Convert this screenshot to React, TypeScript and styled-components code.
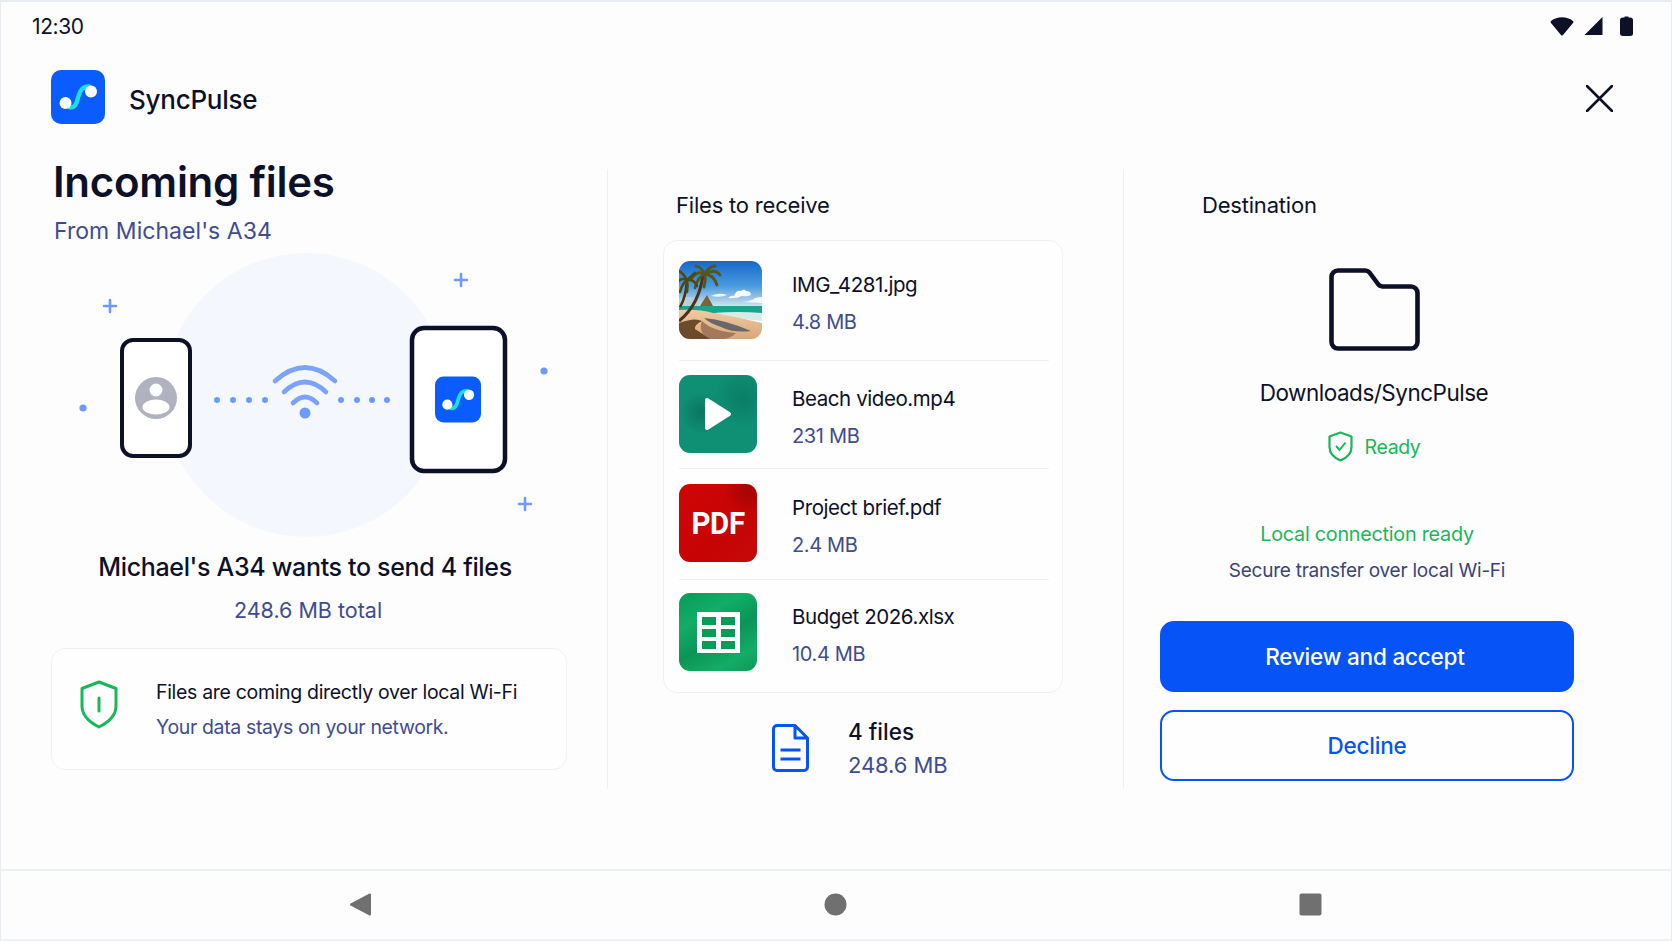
import React from "react";
import styled, { createGlobalStyle } from "styled-components";

const GlobalStyle = createGlobalStyle`
	html, body {
		margin: 0;
		padding: 0;
		overflow: hidden;
		background: #fdfdfe;
	}
	* {
		box-sizing: border-box;
	}
`;

const ink = "#0d1128";
const muted = "#3f4c8f";
const green = "#18b85a";
const blue = "#0653f7";
const line = "#eff1f6";

const Page = styled.div`
	width: 1672px;
	height: 941px;
	display: flex;
	flex-direction: column;
	background: #fdfdfe;
	color: ${ink};
	font-family: Inter, "Liberation Sans", sans-serif;
	border-left: 1px solid #e9edf2;
	border-right: 1px solid #e9edf2;
	border-top: 2px solid #e9edf2;
`;

const StatusBar = styled.div`
	height: 48px;
	display: flex;
	align-items: center;
	justify-content: space-between;
	padding: 0 38px 0 31px;
`;

const Time = styled.span`
	font-size: 21px;
	letter-spacing: -0.4px;
`;

const StatusIcons = styled.div`
	display: flex;
	align-items: center;
	gap: 10px;
`;

const Header = styled.div`
	height: 108px;
	display: flex;
	justify-content: space-between;
	padding: 20px 58px 0 50px;
`;

const Brand = styled.div`
	display: flex;
	align-items: center;
	height: 54px;
	gap: 24px;
`;

const BrandName = styled.span`
	padding-top: 4px;
	font-size: 26px;
	font-weight: 500;
	letter-spacing: -0.25px;
`;

const CloseIcon = styled.svg`
	margin-top: 15px;
`;

const Body = styled.div`
	flex: 1;
	display: grid;
	grid-template-columns: 606px 1px 515px 1px 1fr;
`;

const Divider = styled.div`
	margin-top: 11px;
	height: 620px;
	background: #edeff4;
`;

const LeftColumn = styled.div`
	padding-left: 50px;
`;

const Title = styled.h1`
	margin: 0;
	padding-left: 2px;
	font-size: 42px;
	line-height: 48px;
	font-weight: 600;
	letter-spacing: -0.26px;
`;

const Subtitle = styled.div`
	margin-top: 10px;
	padding-left: 3px;
	font-size: 23px;
	line-height: 30px;
	color: ${muted};
	letter-spacing: 0.05px;
`;

const Illustration = styled.svg`
	display: block;
	margin-top: 4px;
`;

const Offer = styled.div`
	width: 508px;
	text-align: center;
	font-size: 25px;
	line-height: 34px;
	font-weight: 500;
	letter-spacing: -0.33px;
	margin-top: 10px;
`;

const OfferTotal = styled.div`
	width: 514px;
	text-align: center;
	font-size: 21.5px;
	line-height: 30px;
	color: ${muted};
	margin-top: 11px;
`;

const Card = styled.div`
	border: 1.5px solid ${line};
	border-radius: 14px;
	background: #fefefe;
`;

const InfoCard = styled(Card)`
	width: 516px;
	height: 122px;
	margin-top: 23px;
	display: flex;
	align-items: center;
	gap: 38px;
	padding-left: 28px;
`;

const InfoShield = styled.svg`
	margin-bottom: 10px;
`;

const InfoText = styled.div`
	display: flex;
	flex-direction: column;
	gap: 9px;
`;

const InfoTitle = styled.div`
	font-size: 19.5px;
	line-height: 26px;
	letter-spacing: -0.32px;
`;

const InfoSub = styled.div`
	font-size: 19.5px;
	line-height: 26px;
	color: ${muted};
	letter-spacing: -0.36px;
`;

const MiddleColumn = styled.div`
	padding-left: 55px;
`;

const SectionLabel = styled.div<{ $inset: number }>`
	padding-left: ${(p) => p.$inset}px;
	margin-top: 33px;
	font-size: 22px;
	line-height: 28px;
	letter-spacing: -0.2px;
`;

const FileCard = styled(Card)`
	width: 400px;
	height: 453px;
	margin-top: 21px;
	padding: 0 13px 6px 15px;
	display: grid;
	grid-template-rows: 120px 108px 111px 1fr;
`;

const FileRow = styled.div`
	display: grid;
	grid-template-columns: 113px 1fr;
	align-items: center;
	border-bottom: 1.5px solid ${line};
	&:last-child {
		border-bottom: none;
	}
`;

const Thumb = styled.div<{ $tone?: string }>`
	width: 78px;
	height: 78px;
	margin-bottom: 2px;
	border-radius: 11px;
	display: flex;
	align-items: center;
	justify-content: center;
	overflow: hidden;
	background: ${(p) => p.$tone || "none"};
`;

const PhotoThumb = styled.svg`
	margin-bottom: 2px;
`;

const PdfLabel = styled.span`
	font-family: Roboto, "Liberation Sans", sans-serif;
	font-size: 31px;
	font-weight: 700;
	color: #ffffff;
	letter-spacing: -0.3px;
	transform: scaleX(0.95);
`;

const FileText = styled.div`
	display: flex;
	flex-direction: column;
	gap: 9px;
	padding-top: 5px;
`;

const FileName = styled.div`
	font-size: 20.5px;
	line-height: 28px;
	letter-spacing: -0.42px;
`;

const FileSize = styled.div`
	font-size: 20px;
	line-height: 28px;
	color: ${muted};
	letter-spacing: -0.35px;
`;

const Summary = styled.div`
	display: flex;
	align-items: center;
	gap: 39px;
	margin-top: 22px;
	padding-left: 109px;
`;

const SummaryText = styled.div`
	display: flex;
	flex-direction: column;
	gap: 3px;
	padding-top: 2px;
`;

const SummaryCount = styled.div`
	font-size: 22.5px;
	line-height: 30px;
	font-weight: 500;
`;

const SummarySize = styled.div`
	font-size: 22px;
	line-height: 30px;
	letter-spacing: -0.1px;
	color: ${muted};
`;

const RightColumn = styled.div`
	padding-left: 36px;
	width: 450px;
`;

const Destination = styled.div`
	width: 414px;
	padding-left: 14px;
	margin-top: 49px;
	display: flex;
	flex-direction: column;
	align-items: center;
`;

const FolderPath = styled.div`
	margin-top: 25px;
	font-size: 22.5px;
	line-height: 34px;
	letter-spacing: -0.5px;
`;

const ReadyRow = styled.div`
	margin-top: 21px;
	display: flex;
	align-items: center;
	gap: 12px;
	font-size: 19.5px;
	color: ${green};
	letter-spacing: -0.4px;
`;

const ConnectionText = styled.div<{ $ok?: boolean }>`
	width: 414px;
	text-align: center;
	font-size: ${(p) => (p.$ok ? 19.8 : 19)}px;
	line-height: 28px;
	letter-spacing: -0.25px;
	color: ${(p) => (p.$ok ? green : "#3a4478")};
`;

const ConnectionGroup = styled.div`
	margin-top: 58px;
	display: flex;
	flex-direction: column;
	gap: 9px;
`;

const Actions = styled.div`
	margin-top: 36px;
	display: flex;
	flex-direction: column;
	gap: 18px;
`;

const Button = styled.button<{ $primary?: boolean }>`
	width: 414px;
	height: 71px;
	padding: 0 ${(p) => (p.$primary ? 4 : 0)}px 0 0;
	border-radius: 14px;
	border: 2px solid ${blue};
	background: ${(p) => (p.$primary ? blue : "#fefefe")};
	color: ${(p) => (p.$primary ? "#ffffff" : blue)};
	font-family: inherit;
	font-size: 22.5px;
	font-weight: 500;
	letter-spacing: -0.2px;
`;

const NavBar = styled.div`
	height: 72px;
	flex-shrink: 0;
	border-top: 2px solid #eceff3;
	border-bottom: 2px solid #eef1f4;
	display: flex;
	align-items: center;
	justify-content: center;
	gap: 452px;
	padding: 0 2px 2px 0;
`;

const LogoArt = () => (
	<>
		<rect width="54" height="54" rx="10" fill="#0a5cff" />
		<path
			d="M19 37.5C26 37.5 26 30 27.5 26C29.5 20 31.5 16.5 38 16.5"
			fill="none"
			stroke="#19dfe6"
			strokeWidth="4.4"
			strokeLinecap="round"
		/>
		<circle cx="14.5" cy="33" r="6" fill="#fff" />
		<circle cx="40" cy="21.5" r="6" fill="#fff" />
	</>
);

const BeachThumb = () => (
	<PhotoThumb width="83" height="78" viewBox="0 0 83 78">
		<defs>
			<linearGradient id="sky" x1="0" y1="0" x2="0" y2="1">
				<stop offset="0" stopColor="#1668c9" />
				<stop offset="0.55" stopColor="#4c9be0" />
				<stop offset="1" stopColor="#d5e6ef" />
			</linearGradient>
			<linearGradient id="sand" x1="0" y1="0" x2="0" y2="1">
				<stop offset="0" stopColor="#f1cba1" />
				<stop offset="1" stopColor="#d9a679" />
			</linearGradient>
			<clipPath id="thumbClip">
				<rect width="83" height="78" rx="11" />
			</clipPath>
		</defs>
		<g clipPath="url(#thumbClip)">
			<rect width="83" height="46" fill="url(#sky)" />
			<path d="M49 37q3-3 6-2q2-6 7-5q3-3 5 0q5 0 5 4q-3 2-9 1q-6 3-14 2zM32 35q8-4 16-1q-6 3-16 1zM64 41q9-1 12-4q4-1 7-1v6z" fill="#f6f8fb" />
			<path d="M21 45L28 34L34 45z" fill="#7c6236" />
			<path d="M0 37q12-3 20 2v6H0z" fill="#b9cfd9" />
			<rect y="45" width="83" height="9" fill="#17a58d" />
			<path d="M34 52q24-2 49 0v8q-24-2-49-8z" fill="#d7ecea" />
			<path d="M0 49q20-1 34 3q24 4 49 10v16H0z" fill="url(#sand)" />
			<path d="M0 78V62q16-6 23-2q-8 4-7 8q6 4 16 10z" fill="#6e4a2c" />
			<path d="M23 60q10 10 34 12q-6 6-14 6H32q-14-6-9-18z" fill="#a4785a" />
			<path d="M25 57q22 2 47 13q-18 2-30-4q-12-4-17-9z" fill="#68686a" />
			<path d="M0 60Q20 44 24 14" fill="none" stroke="#4a331a" strokeWidth="3" />
			<path d="M1 46Q7 36 8 19" fill="none" stroke="#4a331a" strokeWidth="2.6" />
			<g fill="none" stroke="#56551a" strokeWidth="2.8" strokeLinecap="round">
				<path d="M26 13Q19 9 13 17" />
				<path d="M26 13Q19 15 16 27" />
				<path d="M26 13Q36 7 41 14" />
				<path d="M26 13Q35 14 38 24" />
				<path d="M26 13Q22 6 17 5" />
				<path d="M26 13Q29 6 36 5" />
				<path d="M26 13Q27 20 25 26" />
			</g>
			<g fill="none" stroke="#4e4a14" strokeWidth="2.6" strokeLinecap="round">
				<path d="M8 19Q2 16 -2 22" />
				<path d="M8 19Q3 23 1 31" />
				<path d="M8 19Q15 18 18 25" />
				<path d="M8 19Q13 15 16 12" />
				<path d="M8 19Q4 12 0 10" />
				<path d="M8 19Q9 25 8 31" />
			</g>
		</g>
	</PhotoThumb>
);

const Sheet = () => (
	<svg width="43" height="41" viewBox="0 0 43 41">
		<rect width="43" height="41" fill="#fff" />
		{[5, 17, 29].map((y) =>
			[5, 24].map((x) => (
				<rect key={`${x}-${y}`} x={x} y={y} width="14" height="8" fill="#0b9a57" />
			)),
		)}
	</svg>
);

const files = [
	{ name: "IMG_4281.jpg", size: "4.8 MB", kind: "image" },
	{ name: "Beach video.mp4", size: "231 MB", kind: "video" },
	{ name: "Project brief.pdf", size: "2.4 MB", kind: "pdf" },
	{ name: "Budget 2026.xlsx", size: "10.4 MB", kind: "sheet" },
];

const FileThumb = ({ kind }: { kind: string }) => {
	if (kind === "image") return <BeachThumb />;
	if (kind === "video")
		return (
			<Thumb $tone="radial-gradient(circle at 28% 48%, #0b7561 0%, transparent 30%), radial-gradient(circle at 82% 30%, #0a7d66 0%, transparent 35%), #0f8f74">
				<svg width="28" height="34" viewBox="0 0 28 34">
					<path d="M3 3L25 17L3 31Z" fill="#fff" stroke="#fff" strokeWidth="4" strokeLinejoin="round" />
				</svg>
			</Thumb>
		);
	if (kind === "pdf")
		return (
			<Thumb $tone="radial-gradient(circle at 88% 10%, #a50505 0%, transparent 24%), linear-gradient(135deg, #cf0505 0%, #c70404 60%, #c40a0a 100%)">
				<PdfLabel>PDF</PdfLabel>
			</Thumb>
		);
	return (
		<Thumb $tone="linear-gradient(150deg, #0a9a58 0%, #12ad66 30%, #0a9556 55%, #12ad66 80%, #0a9a58 100%)">
			<Sheet />
		</Thumb>
	);
};

const Plus = ({ x, y }: { x: number; y: number }) => (
	<path
		d={`M${x - 6} ${y}H${x + 6}M${x} ${y - 6}V${y + 6}`}
		stroke="#6c9bfb"
		strokeWidth="2.6"
		strokeLinecap="round"
	/>
);

const Transfer = () => (
	<Illustration width="556" height="290" viewBox="51 250 556 290">
		<circle cx="306" cy="395" r="142" fill="#f4f7fe" />
		<Plus x={110} y={306} />
		<Plus x={461} y={280} />
		<Plus x={525} y={504} />
		<circle cx="83" cy="408" r="3.6" fill="#6c9bfb" />
		<circle cx="544" cy="371" r="3.6" fill="#6c9bfb" />

		<rect x="122" y="340" width="68" height="116" rx="11" fill="#fff" stroke={ink} strokeWidth="4" />
		<circle cx="156" cy="398" r="21" fill="#b0b3bf" />
		<circle cx="156" cy="390" r="6.5" fill="#fff" />
		<ellipse cx="156" cy="407" rx="13.5" ry="7.5" fill="#fff" />

		<rect x="412" y="328" width="93" height="143" rx="12" fill="#fff" stroke={ink} strokeWidth="4.5" />
		<svg x="435" y="376" width="46" height="47" viewBox="0 0 54 54">
			<LogoArt />
		</svg>

		{[217, 233, 249, 265, 341, 357, 372, 387].map((x) => (
			<circle key={x} cx={x} cy="400" r="3" fill="#6c9bfb" />
		))}
		<g fill="none" stroke="#7aa3f9" strokeLinecap="round">
			<path d="M275 381Q305 354 335 381" strokeWidth="4.6" />
			<path d="M284 392Q305 372 326 392" strokeWidth="4.6" />
			<path d="M293 403Q305 391 317 403" strokeWidth="4.6" />
		</g>
		<circle cx="305" cy="413" r="5.5" fill="#6c9bfb" />
	</Illustration>
);

export default function App() {
	return (
		<Page>
			<GlobalStyle />
			<StatusBar>
				<Time>12:30</Time>
				<StatusIcons>
					<svg width="24" height="20" viewBox="0 0 24 20">
						<path d="M1 5C7 0 17 0 23 5Q24 6 23 7L13 19Q12 20 11 19L1 7Q0 6 1 5Z" fill={ink} />
					</svg>
					<svg width="19" height="20" viewBox="0 0 20 20">
						<path d="M19.5 0.5V19.5H0.5Z" fill={ink} />
					</svg>
					<svg width="20" height="20" viewBox="0 0 20 20">
						<path d="M11.500 0.5H15.500V1.500H17Q20 1.500 20 4V17.500Q20 20 17 20H10Q7 20 7 17.500V4Q7 1.500 10 1.500H11.500Z" fill={ink} />
					</svg>
				</StatusIcons>
			</StatusBar>
			<Header>
				<Brand>
					<svg width="54" height="54" viewBox="0 0 54 54">
						<LogoArt />
					</svg>
					<BrandName>SyncPulse</BrandName>
				</Brand>
				<CloseIcon width="27" height="27" viewBox="0 0 27 27">
					<path d="M1 1L26 26M26 1L1 26" stroke={ink} strokeWidth="2.6" strokeLinecap="round" />
				</CloseIcon>
			</Header>
			<Body>
				<LeftColumn>
					<Title>Incoming files</Title>
					<Subtitle>From Michael's A34</Subtitle>
					<Transfer />
					<Offer>Michael's A34 wants to send 4 files</Offer>
					<OfferTotal>248.6 MB total</OfferTotal>
					<InfoCard>
						<InfoShield width="38" height="49" viewBox="0 0 38 49">
							<path
								d="M19 2L36 8.5V26C36 36 28 42.5 19 47C10 42.5 2 36 2 26V8.5Z"
								fill="none"
								stroke={green}
								strokeWidth="3"
								strokeLinejoin="round"
							/>
							<path d="M19 18V31" stroke={green} strokeWidth="3" strokeLinecap="round" />
						</InfoShield>
						<InfoText>
							<InfoTitle>Files are coming directly over local Wi-Fi</InfoTitle>
							<InfoSub>Your data stays on your network.</InfoSub>
						</InfoText>
					</InfoCard>
				</LeftColumn>
				<Divider />
				<MiddleColumn>
					<SectionLabel $inset={13}>Files to receive</SectionLabel>
					<FileCard>
						{files.map((file) => (
							<FileRow key={file.name}>
								<FileThumb kind={file.kind} />
								<FileText>
									<FileName>{file.name}</FileName>
									<FileSize>{file.size}</FileSize>
								</FileText>
							</FileRow>
						))}
					</FileCard>
					<Summary>
						<svg width="37" height="48" viewBox="0 0 37 48">
							<path
								d="M5 1.5H23L35.5 14V43A3.5 3.5 0 0 1 32 46.5H5A3.5 3.5 0 0 1 1.5 43V5A3.5 3.5 0 0 1 5 1.5ZM23 1.5V14H35.5"
								fill="none"
								stroke={blue}
								strokeWidth="3"
								strokeLinejoin="round"
							/>
							<path d="M8.5 26H28.5M8.5 35H28.5" stroke={blue} strokeWidth="3" />
						</svg>
						<SummaryText>
							<SummaryCount>4 files</SummaryCount>
							<SummarySize>248.6 MB</SummarySize>
						</SummaryText>
					</Summary>
				</MiddleColumn>
				<Divider />
				<RightColumn>
					<SectionLabel $inset={42}>Destination</SectionLabel>
					<Destination>
						<svg width="91" height="83" viewBox="0 0 91 83">
							<path
								d="M9 2.5H36A6 6 0 0 1 40.500 4.500L49 16A6 6 0 0 0 53.500 18.500H82A6.500 6.500 0 0 1 88.500 25V74A6.500 6.500 0 0 1 82 80.500H9A6.500 6.500 0 0 1 2.500 74V9A6.500 6.500 0 0 1 9 2.500Z"
								fill="none"
								stroke={ink}
								strokeWidth="4.6"
								strokeLinejoin="round"
							/>
						</svg>
						<FolderPath>Downloads/SyncPulse</FolderPath>
						<ReadyRow>
							<svg width="25" height="31" viewBox="0 0 25 31">
								<path
									d="M12.5 1.5L23.500 5.500V16C23.500 23 18.500 27 12.500 29.500C6.500 27 1.500 23 1.500 16V5.500Z"
									fill="none"
									stroke={green}
									strokeWidth="2.2"
									strokeLinejoin="round"
								/>
								<path d="M8 15L11.500 19L17.500 11.500" fill="none" stroke={green} strokeWidth="2" />
							</svg>
							Ready
						</ReadyRow>
					</Destination>
					<ConnectionGroup>
						<ConnectionText $ok>Local connection ready</ConnectionText>
						<ConnectionText>Secure transfer over local Wi-Fi</ConnectionText>
					</ConnectionGroup>
					<Actions>
						<Button $primary>Review and accept</Button>
						<Button>Decline</Button>
					</Actions>
				</RightColumn>
			</Body>
			<NavBar>
				<svg width="23" height="23" viewBox="0 0 23 23">
					<path d="M21 1.500V21.500L2 11.500Z" fill="#707070" stroke="#707070" strokeWidth="2" strokeLinejoin="round" />
				</svg>
				<svg width="23" height="23" viewBox="0 0 23 23">
					<circle cx="11.500" cy="11.500" r="11" fill="#707070" />
				</svg>
				<svg width="23" height="23" viewBox="0 0 23 23">
					<rect x="0.500" y="0.500" width="22" height="22" rx="2" fill="#707070" />
				</svg>
			</NavBar>
		</Page>
	);
}
